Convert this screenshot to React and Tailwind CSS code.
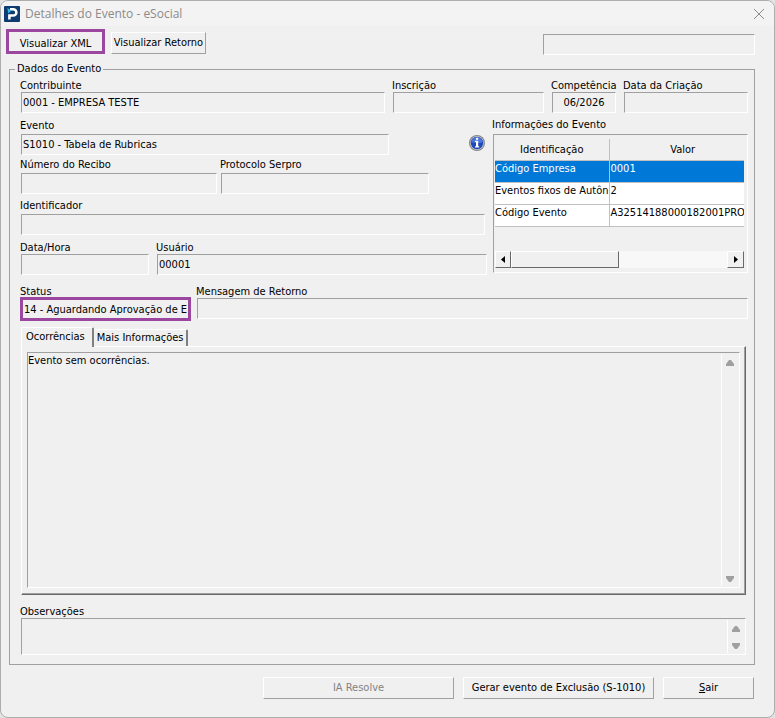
import React, { useId, useState } from 'react';

const sunken = 'border border-t-[#a0a0a0] border-l-[#a0a0a0] border-b-white border-r-white';
const raised = 'border border-t-white border-l-white border-b-[#a0a0a0] border-r-[#a0a0a0]';

const eventInfo = [
  { id: 'Código Empresa', value: '0001' },
  { id: 'Eventos fixos de Autôn', value: '2' },
  { id: 'Código Evento', value: 'A32514188000182001PROV' }
];

function Field({ label, value = '', className = '', boxClass = '', spaced = false }) {
  const id = useId();
  return (
    <div className={`flex min-w-0 flex-col ${spaced ? 'gap-0.5' : ''} ${className}`}>
      <label htmlFor={id} className="-ml-px h-3.5 leading-[15px] whitespace-nowrap">{label}</label>
      <input
        id={id}
        readOnly
        value={value}
        className={`w-full min-w-0 bg-transparent px-px outline-none ${boxClass || `h-[21px] ${sunken}`}`}
      />
    </div>
  );
}

function Triangle({ down = false }) {
  return (
    <svg width="8" height="6" viewBox="0 0 8 6" className={down ? 'rotate-180' : ''} aria-hidden="true">
      <path d="M3 0h2l3 4v2H0V4z" fill="#a0a0a0" />
    </svg>
  );
}

// Read-only text box with its own vertical scroll arrows
function Memo({ label, id, value = '', className = '' }) {
  return (
    <div className={`flex ${sunken} ${className}`}>
      <textarea
        id={id}
        aria-label={label}
        readOnly
        value={value}
        className="min-w-0 flex-1 resize-none overflow-hidden bg-transparent py-px leading-[14px] outline-none"
      />
      <div className="my-px flex w-[18px] flex-col items-center justify-between border-l border-white pt-1.5 pr-px pb-1">
        <button type="button" aria-label="Rolar para cima" className="flex"><Triangle /></button>
        <button type="button" aria-label="Rolar para baixo" className="flex"><Triangle down /></button>
      </div>
    </div>
  );
}

function Logo() {
  return (
    <svg width="16" height="16" viewBox="0 0 16 16" aria-hidden="true">
      <rect width="16" height="16" rx="1" fill="#0f3c70" />
      <path d="M6 3.2h3.2a3.2 3.2 0 0 1 0 6.4H5.4V13.4" fill="none" stroke="#fff" strokeWidth="2.5" />
      <path d="M3.4 2l4 2.6-3.2 3z" fill="#38b6e8" />
    </svg>
  );
}

function InfoIcon() {
  return (
    <svg width="16" height="16" viewBox="0 0 16 16" aria-hidden="true">
      <circle cx="8" cy="8" r="8" fill="#858585" />
      <circle cx="8" cy="8" r="6.9" fill="#c3c7d2" />
      <circle cx="8" cy="8" r="6.2" fill="#1f48b8" />
      <path d="M2.2 7a5.9 5.9 0 0 1 11.6 0c-3 1.6-8.4 1.6-11.6 0z" fill="#4a76dc" />
      <path d="M7 2.8h2.2v2H7zM6 5.8h3.2v5.4h1v1.3H6v-1.3h1V7H6z" fill="#fff" />
    </svg>
  );
}

function EventTable() {
  const [selected, setSelected] = useState(0);

  return (
    <div className={`flex h-[139px] flex-col justify-between pr-[3px] pb-1 pl-px ${sunken}`}>
      <div className="overflow-hidden pt-1">
        <table aria-label="Informações do Evento" className="w-[calc(100%+12px)] table-fixed border-collapse">
          <thead>
            <tr className="h-[21px]">
              <th className="w-[114px] border-r border-b border-[#c0c0c0] pt-0.5 font-normal">Identificação</th>
              <th className="border-b border-[#c0c0c0] pt-0.5 font-normal">Valor</th>
            </tr>
          </thead>
          <tbody>
            {eventInfo.map((row, index) => (
              <tr
                key={row.id}
                onClick={() => setSelected(index)}
                className={`h-[22px] align-top leading-[15px] ${
                  selected === index ? 'bg-[#0078d7] text-white' : 'bg-white'
                }`}
              >
                <td className="border-r border-b border-[#c0c0c0] whitespace-nowrap">{row.id}</td>
                <td className="border-b border-[#c0c0c0] pl-px whitespace-nowrap">{row.value}</td>
              </tr>
            ))}
          </tbody>
        </table>
      </div>
      <div className="flex h-[17px] bg-[#f8f8f8]">
        <button type="button" aria-label="Rolar para a esquerda" className="flex w-4 items-center justify-center border border-t-white border-l-white border-r-[#696969] border-b-[#696969] bg-[#f0f0f0]">
          <svg width="4" height="7" viewBox="0 0 4 7"><path d="M4 0v7L0 3.5z" /></svg>
        </button>
        <div className="w-[108px] border border-t-white border-l-white border-r-[#696969] border-b-[#696969] bg-[#f0f0f0]" />
        <div className="flex-1" />
        <button type="button" aria-label="Rolar para a direita" className="flex w-[17px] items-center justify-center border border-t-white border-l-white border-r-[#696969] border-b-[#696969] bg-[#f0f0f0]">
          <svg width="4" height="7" viewBox="0 0 4 7"><path d="M0 0v7l4-3.5z" /></svg>
        </button>
      </div>
    </div>
  );
}

const tabs = [
  { key: 'ocorrencias', label: 'Ocorrências', text: 'Evento sem ocorrências.' },
  { key: 'mais', label: 'Mais Informações', text: '' }
];

function Tabs() {
  const [active, setActive] = useState('ocorrencias');
  const current = tabs.find((tab) => tab.key === active);

  return (
    <div className="mt-[7px] flex min-h-[268px] flex-col pr-0.5">
      <div role="tablist" className="flex items-end">
        {tabs.map((tab) => (
          <button
            key={tab.key}
            type="button"
            role="tab"
            aria-selected={tab.key === active}
            onClick={() => setActive(tab.key)}
            className={`rounded-t-xs border-t border-r-2 border-t-white border-r-[#808080] ${
              tab.key === active
                ? 'z-10 -mb-px h-5 border-l border-l-white bg-[#f0f0f0] pr-[7px] pl-1'
                : 'h-[17px] px-[3px]'
            }`}
          >
            {tab.label}
          </button>
        ))}
      </div>
      <div role="tabpanel" className="flex flex-1 border border-t-white border-l-white border-r-[#696969] border-b-[#696969]">
        <div className="flex flex-1 border-r border-b border-[#a0a0a0] p-[5px] pr-1">
          <Memo label={current.label} value={current.text} className="flex-1" />
        </div>
      </div>
    </div>
  );
}

export default function App() {
  return (
    <div className="min-h-screen bg-[#e3e3e6] font-['DejaVu_Sans_Condensed','Noto_Sans',sans-serif] text-[11px] text-black">
      <main className="flex min-h-screen flex-col overflow-hidden rounded-lg border border-[#adadad] bg-[#f0f0f0]">
        <header className="flex h-[25px] items-center gap-[5px] bg-[#f3f3f3] pr-2.5 pl-[3px]">
          <Logo />
          <h1 className="flex-1 font-['Open_Sans',sans-serif] text-xs text-[#8b8b8b]">Detalhes do Evento - eSocial</h1>
          <button type="button" aria-label="Fechar">
            <svg width="10" height="10" viewBox="0 0 10 10" fill="none" stroke="#8b8b8b">
              <path d="M0 0l10 10M10 0L0 10" />
            </svg>
          </button>
        </header>

        <div className="flex items-start pt-[3px] pr-[19px] pl-[5px]">
          <button type="button" className="h-[25px] w-[99px] border-3 border-[#9b479f] pt-1">Visualizar XML</button>
          <button type="button" className={`mt-[3px] ml-1.5 h-[22px] w-[95px] ${raised}`}>Visualizar Retorno</button>
          <input aria-label="Situação" readOnly className={`mt-[5px] ml-auto h-[21px] w-[212px] outline-none ${sunken}`} />
        </div>

        <fieldset className="mt-[7px] mr-[19px] ml-2 flex-1 border border-[#a0a0a0] px-[5px] pb-2">
          <legend className="px-0.5 leading-[14px]">Dados do Evento</legend>
          <div className="flex flex-col pt-0.5 pr-px pl-1.5">
            <div className="flex gap-2">
              <Field label="Contribuinte" value="0001 - EMPRESA TESTE" className="flex-1" />
              <Field label="Inscrição" className="w-[151px]" />
              <Field label="Competência" value="06/2026" className="w-16" boxClass={`h-[21px] text-center ${sunken}`} />
              <Field label="Data da Criação" className="w-[124px]" />
            </div>

            <div className="mt-[5px] flex gap-1.5">
              <div className="min-w-0 flex-1">
                <div className="flex items-start pr-0.5">
                  <Field label="Evento" value="S1010 - Tabela de Rubricas" className="mr-20 flex-1" spaced />
                  <button type="button" aria-label="Informações" className="mt-[17px]"><InfoIcon /></button>
                </div>
                <div className="mt-0.5 flex gap-1">
                  <Field label="Número do Recibo" className="w-[196px]" spaced />
                  <Field label="Protocolo Serpro" className="w-52" spaced />
                </div>
                <Field label="Identificador" className="mt-1 pr-0.5" spaced />
                <div className="mt-[5px] flex gap-2">
                  <Field label="Data/Hora" className="w-32" />
                  <Field label="Usuário" value="00001" className="flex-1" />
                </div>
              </div>
              <section className="flex w-[255px] flex-col gap-0.5">
                <h2 className="-ml-px leading-[14px]">Informações do Evento</h2>
                <EventTable />
              </section>
            </div>

            <div className="mt-[9px] flex gap-[7px]">
              <Field
                label="Status"
                value="14 - Aguardando Aprovação de Envio"
                className="w-[169px]"
                boxClass="h-[22px] border-2 border-[#9b479f] ring-1 ring-[#9b479f]"
              />
              <Field label="Mensagem de Retorno" className="flex-1" />
            </div>

            <Tabs />

            <div className="mt-[9px] flex flex-col pr-0.5">
              <label htmlFor="observacoes" className="-ml-px h-3.5 leading-[15px]">Observações</label>
              <Memo id="observacoes" className="h-[37px]" />
            </div>
          </div>
        </fieldset>

        <footer className="flex justify-end gap-[9px] pt-3 pr-5 pb-[18px]">
          <button type="button" disabled className={`h-[22px] w-[191px] text-[#838383] ${raised}`}>IA Resolve</button>
          <button type="button" className={`h-[22px] w-[191px] ${raised}`}>Gerar evento de Exclusão (S-1010)</button>
          <button type="button" className={`h-[22px] w-[91px] ${raised}`}><u>S</u>air</button>
        </footer>
      </main>
    </div>
  );
}
